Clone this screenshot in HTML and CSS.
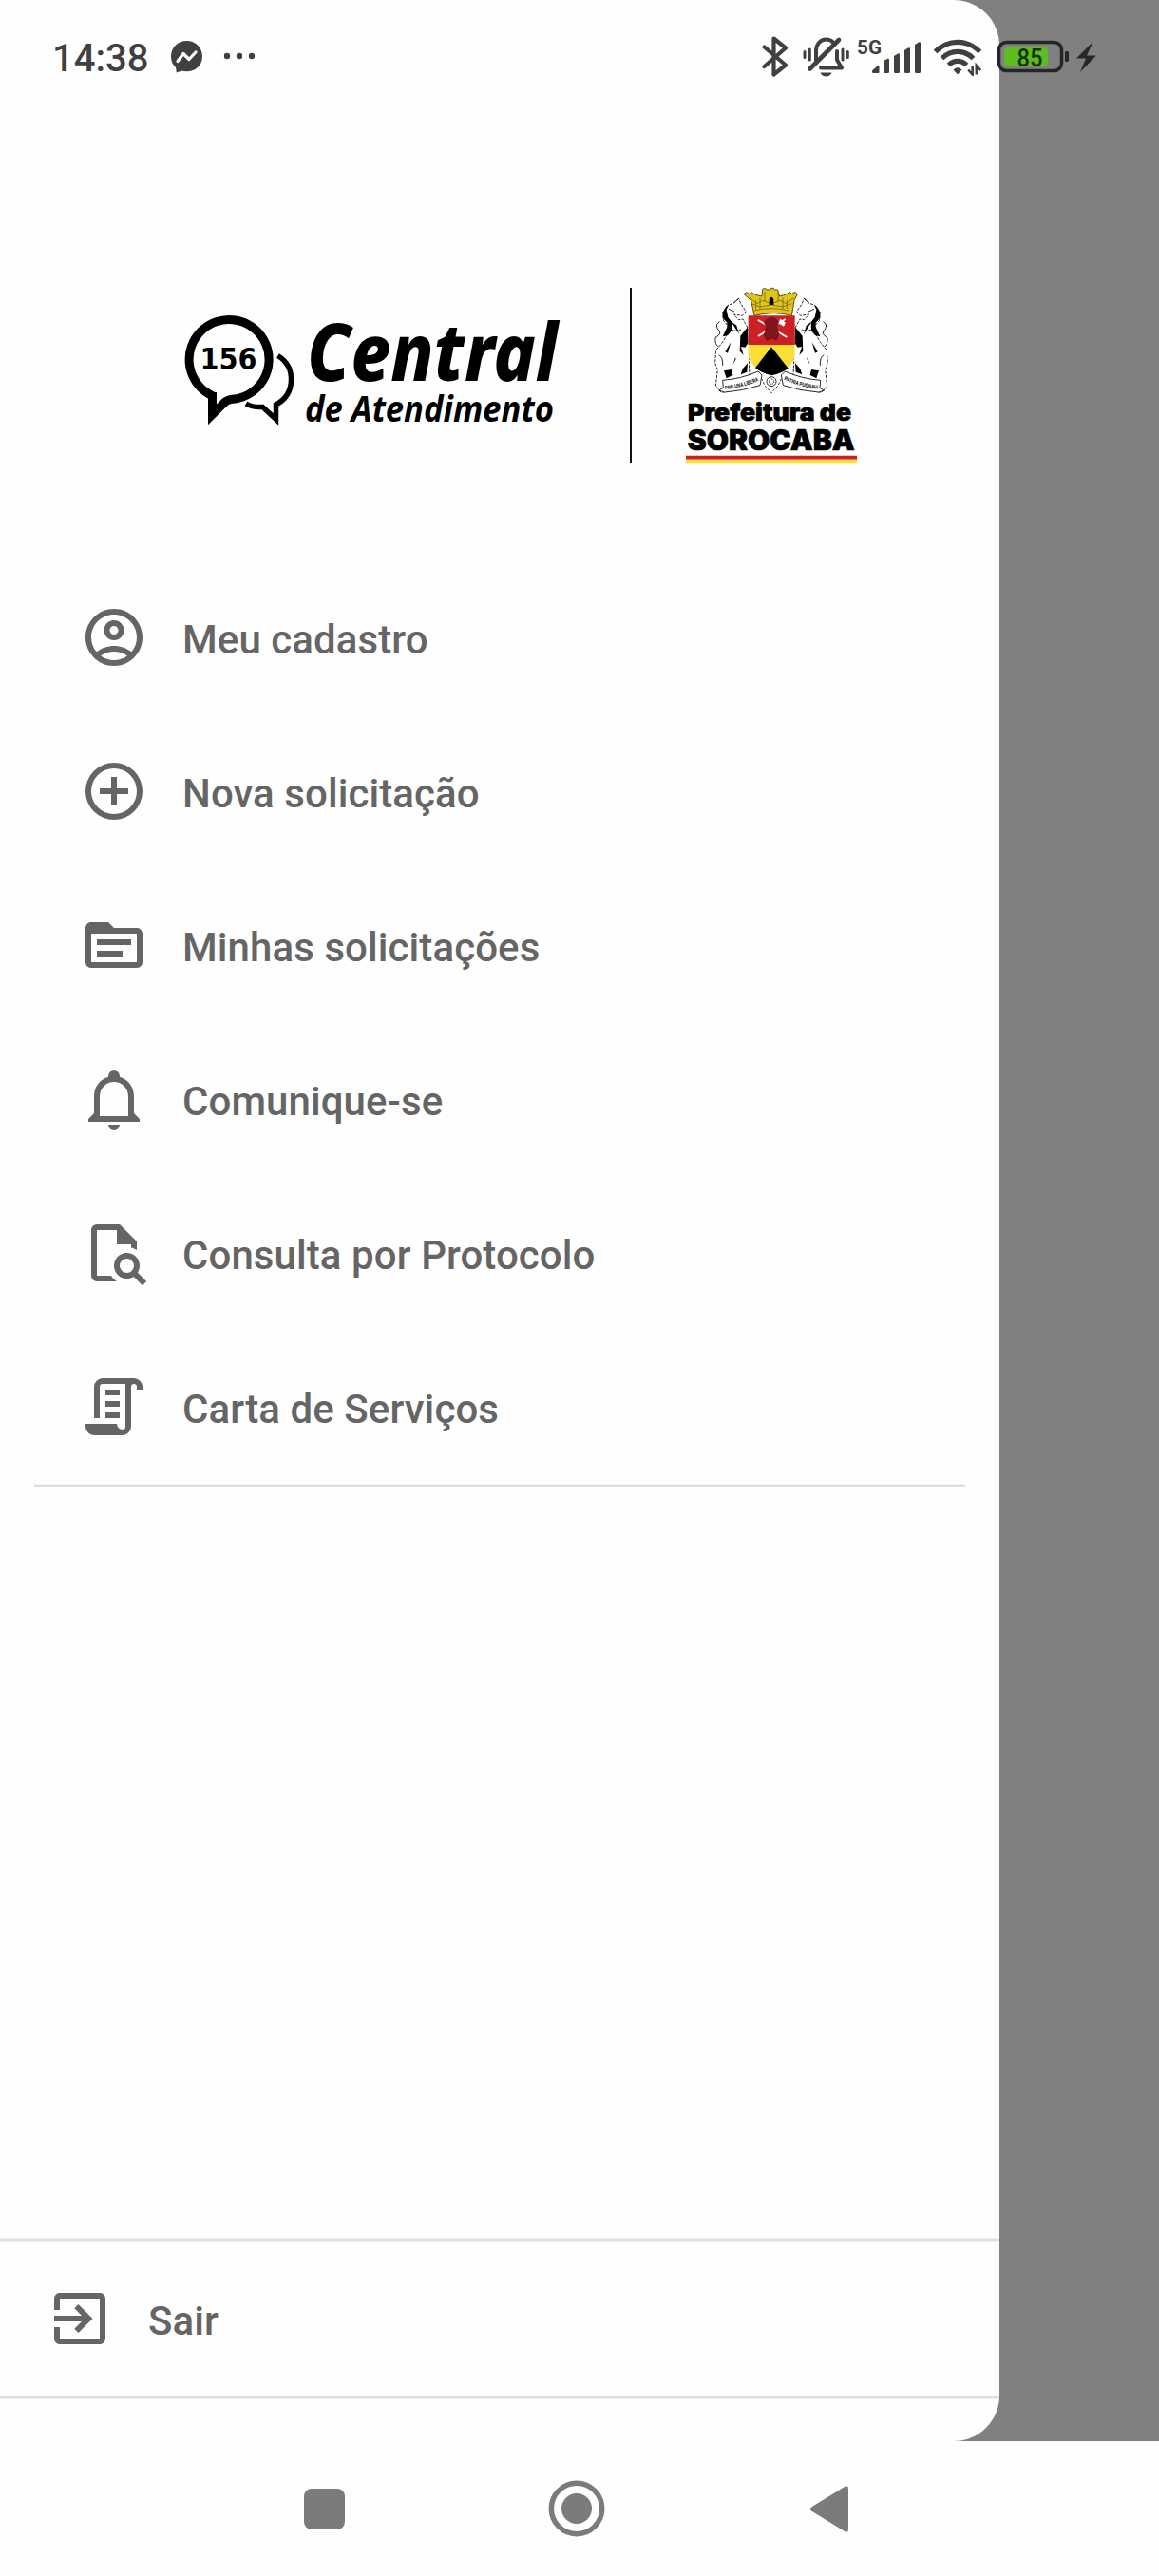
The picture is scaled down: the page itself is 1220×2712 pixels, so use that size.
FILE: index.html
```html
<!DOCTYPE html>
<html lang="pt-BR">
<head>
<meta charset="utf-8">
<title>Central de Atendimento 156</title>
<link rel="stylesheet" href="styles.css">
</head>
<body>
<div class="screen">
  <header class="status">
    <span class="clock">14:38</span>
    <svg class="messenger" width="34" height="34" viewBox="179 43 34 34"><path d="M196.500 43C187 43 180 50 180 59.500c0 4.800 1.800 8.500 5 11.500l.8 5.500 5.500-2c1.600.5 3.400.7 5.200.7 9.500 0 16.500-6.500 16.500-15.700S206 43 196.500 43z" fill="#404040"/><path d="M187 64.500l6-8 6 6 7-7.500" fill="none" stroke="#fff" stroke-width="3.200" stroke-linejoin="round" stroke-linecap="round"/></svg>
    <svg class="more" width="34" height="8" viewBox="235 55 34 8" fill="#404040"><circle cx="239" cy="59" r="3.200"/><circle cx="252" cy="59" r="3.200"/><circle cx="265" cy="59" r="3.200"/></svg>
    <svg class="bluetooth" width="28" height="44" viewBox="802 37 28 44"><path d="M804.500 49.500L827 68.500 814.500 78.500V40.500L827 50.500 804.500 70" fill="none" stroke="#404040" stroke-width="4.200" stroke-linejoin="round" stroke-linecap="round"/></svg>
    <svg class="mute" width="50" height="44" viewBox="845 38 50 44" fill="none" stroke="#404040" stroke-width="4" stroke-linecap="round">
      <path d="M859 63.500V54c0-7.500 4.500-12.400 10.500-12.400 3 0 5.500 1 7.500 3M881 54v9l5 8.500H864" stroke-linejoin="round"/><path d="M852.500 72.500L883 42" stroke-width="4.600"/><path d="M847 54.500v6M852.300 52v11M887 52v11M892.300 54.500v6" stroke-width="3"/><path d="M863.500 76.500h12c-1 2.500-3.300 4-6 4s-5-1.500-6-4z" fill="#404040" stroke="none"/></svg>
    <svg class="signal" width="68" height="42" viewBox="902 38 68 42" fill="#404040"><text x="902" y="57" class="net" textLength="26" lengthAdjust="spacingAndGlyphs">5G</text>
      <path d="M918 74.500l6-5.500q1.500-1 1.500 1v6q0 1-1 1h-5q-1.500 0-1.500-1zM930 64l4-2q2-1 2 1v12.500q0 1.500-1.500 1.500h-3q-1.500 0-1.500-1.500zM941 59l4-2.500q2-1 2 1v18q0 1.500-1.500 1.500h-3q-1.500 0-1.500-1.500zM952 53l4-2.500q2-1 2 1v24q0 1.500-1.500 1.500h-3q-1.500 0-1.500-1.500zM963 47l4-2.500q2-1 2 1v30q0 1.500-1.500 1.500h-3q-1.500 0-1.500-1.500z"/></svg>
    <svg class="wifi" width="52" height="40" viewBox="983 40 52 40" fill="none" stroke="#404040" stroke-width="5.200"><path d="M984.500 54.500C998 41 1018 41 1031.500 54.500M991.500 61.500C1001 52 1015 52 1024.500 61.500M998.500 68.500c5.500-5.500 13.500-5.500 19 0"/><path d="M1003.500 73.500q4.500-4.500 9 0l-4.500 5z" fill="#404040" stroke="none"/><path d="M1023.700 69v9.500l-4.500-5M1027.800 78.500V69l4.500 5" stroke-width="2.600"/></svg>
    <svg class="battery" width="108" height="36" viewBox="1049 42 108 36"><rect x="1057" y="50" width="46" height="19" rx="3" fill="#5dbd20"/><rect x="1051.500" y="44.500" width="66" height="30" rx="8" fill="none" stroke="#262626" stroke-width="3.500"/><rect x="1121" y="54" width="4" height="11" rx="1.500" fill="#262626"/><text x="1070.500" y="69.500" class="charge" textLength="27" lengthAdjust="spacingAndGlyphs">85</text><path d="M1150.500 44L1133 61.500h10L1137 76l17-17.500h-10z" fill="#262626"/></svg>
  </header>

  <aside class="drawer">
    <div class="brand">
      <svg class="central" width="402" height="122" viewBox="190 328 402 122">
        <g fill="none" stroke="#000">
          <path d="M224 416.900A42 42 0 1 1 243 420.500C240 421 238 422 236 424L223.500 436.500V413" stroke-width="9"/>
          <path d="M292.500 374.500C303 381 307 391 306.500 401C306 413 300 421 290.500 426V441.500L276.500 428.500C270 429 264 428 259 425" stroke-width="5.500"/>
        </g>
        <text x="210.500" y="388.500" class="n156" textLength="60" lengthAdjust="spacingAndGlyphs">156</text>
        <text x="323" y="400.500" class="big" textLength="264" lengthAdjust="spacingAndGlyphs">Central</text>
        <text x="321" y="443.500" class="sub" textLength="262" lengthAdjust="spacingAndGlyphs">de Atendimento</text>
      </svg>
      <div class="rule"></div>
      <svg class="crest" width="180" height="185" viewBox="246 38 540 555">
        <g id="unicorn" stroke="#000" stroke-width="2.500" stroke-linejoin="round">
          <path d="M413 72l-17 15-17 6-17 22 3 27 14 16-3 27-15 26-20 24-3 40 8 22-6 50 18 22 54-8 36-18-3-72 8-34-9-68-18-32-13 2-16-17 27 4 12-14-16-22z" fill="#fff" stroke-dasharray="9 4"/>
          <path d="M362 115l11-18 8-4-7 14 5 24 12 15-1 28-12 14-16 4 14-30 0-14-14-15zM392 150l22 35-8-28-16-12zM418 190l23-28 2 50-10 14-13-2 8 26-12-12zM378 244l10-34-18 30zM366 300l24-4 4 18-20 10zM402 258l-8 24 10-20zM425 294l16-18-2 28-20 8z" stroke="none"/>
          <path d="M412 72l-15 14M353 145q-16 8-6 24 16 14-8 26-2 22 10 30M381 105l18 8M388 170q20 8 32 0M350 250q14 8 12 34" fill="none"/>
        </g>
        <use href="#unicorn" transform="matrix(-1 0 0 1 1032 0)"/>
        <path d="M429 58l8-6 10 6 5-6 14 8 20 5 2-23 9-3 3 5h12l3-5 8 0 3 5h10l6 21 20-6 12-8 6 6 10-6 8 7-10 20-8 48q-55-16-118 0l-10-48z" fill="#e0c51f" stroke="#5e5207" stroke-width="3"/>
        <path d="M448 70l22 18 18-10 28 10 28-10 18 10 24-18M452 88l28 10 36-6 36 6 28-10M462 110q54-14 108 0M467 76v30M480 70v34M552 70v34M565 76v28M495 50v30M537 50v30" fill="none" stroke="#776808" stroke-width="2.500"/>
        <path d="M509 92V74q7-14 14 0v18z"/>
        <path d="M443 126h147v92H443z" fill="#cb2026"/>
        <path d="M443 218h147v28q-2 47-74 69-69-22-73-69z" fill="#fbdf35"/>
        <path d="M516 225l53 67q-18 15-53 23-33-8-51-24z"/>
        <path d="M473 139l92 55M560 137l-86 54" stroke="#fff" stroke-width="5"/><path d="M544 136l17 12-6 12-17-10z" fill="#fff"/>
        <path d="M503 137l13-6 14 6 9 12-7 12 8 22-8 20-16-7-15 8-8-20 8-22-8-13z" fill="#7d171b" stroke="#2c0709" stroke-width="2" stroke-dasharray="5 3"/>
        <g stroke="#000" stroke-width="2.500" fill="#fff"><path d="M362 330q58-4 112-28l12 12-6 32q-56 18-112 22l-18-6 14-8zM671 330q-58-4-112-28l-12 12 6 32q56 18 112 22l18-6-14-8z"/><path d="M484 324l12 24 20 22 20-22 12-24" stroke-dasharray="8 5"/><circle cx="516" cy="334" r="15"/><circle cx="516" cy="334" r="8" stroke-dasharray="4 2"/></g>
        <path id="motto-l" d="M370 360q60-8 110-30" fill="none"/><path id="motto-r" d="M555 328q52 24 112 31" fill="none"/>
        <text class="motto"><textPath href="#motto-l" textLength="110" lengthAdjust="spacingAndGlyphs">PRO UNA LIBERA</textPath></text>
        <text class="motto"><textPath href="#motto-r" textLength="112" lengthAdjust="spacingAndGlyphs">PATRIA PUGNAVI</textPath></text>
        <text x="252" y="459" class="pref" textLength="516" lengthAdjust="spacingAndGlyphs">Prefeitura de</text>
        <text x="251" y="550" class="soro" textLength="528" lengthAdjust="spacingAndGlyphs">SOROCABA</text>
        <path d="M246 568h540v12H246z" fill="#cb2026"/><path d="M246 580h540v11H246z" fill="#fbdf35"/>
      </svg>
    </div>

    <nav class="menu">
      <a class="item"><svg class="icon" viewBox="0 0 24 24"><path fill-rule="evenodd" d="M12 2C6.480 2 2 6.480 2 12s4.480 10 10 10 10-4.480 10-10S17.520 2 12 2zM7.350 18.500C8.660 17.560 10.260 17 12 17s3.340.56 4.650 1.500C15.340 19.440 13.740 20 12 20s-3.340-.56-4.650-1.500zm10.790-1.380C16.450 15.800 14.320 15 12 15s-4.450.8-6.140 2.120C4.700 15.730 4 13.950 4 12c0-4.420 3.580-8 8-8s8 3.580 8 8c0 1.950-.7 3.730-1.860 5.120z"/><path fill-rule="evenodd" d="M12 6c-1.930 0-3.500 1.570-3.500 3.500S10.070 13 12 13s3.500-1.570 3.500-3.500S13.930 6 12 6zm0 5c-.83 0-1.500-.67-1.500-1.500S11.170 8 12 8s1.500.67 1.500 1.500S12.830 11 12 11z"/></svg><span>Meu cadastro</span></a>
      <a class="item"><svg class="icon" viewBox="0 0 24 24"><path fill-rule="evenodd" d="M13 7h-2v4H7v2h4v4h2v-4h4v-2h-4V7zM12 2a10 10 0 1 0 0 20 10 10 0 0 0 0-20zm0 18a8 8 0 1 1 0-16 8 8 0 0 1 0 16z"/></svg><span>Nova solicitação</span></a>
      <a class="item"><svg class="icon" viewBox="0 0 24 24"><path fill-rule="evenodd" d="M20 6h-8l-2-2H4c-1.100 0-2 .9-2 2v12c0 1.100.9 2 2 2h16c1.100 0 2-.9 2-2V8c0-1.100-.9-2-2-2zM4 8h16v10H4zM6 10h12v2H6zM6 14h9v2H6z"/></svg><span>Minhas solicitações</span></a>
      <a class="item"><svg class="icon" viewBox="0 0 24 24"><path d="M10,21H14A2,2 0 0,1 12,23A2,2 0 0,1 10,21M21,19V20H3V19L5,17V11C5,7.900 7.030,5.170 10,4.290V4A2,2 0 0,1 14,4V4.290C16.970,5.170 19,7.900 19,11V17L21,19M17,11A5,5 0 0,0 7,11V18H17V11Z"/></svg><span>Comunique-se</span></a>
      <a class="item"><svg class="icon" viewBox="0 0 24 24"><path fill-rule="evenodd" d="M14,2H6A2,2 0 0,0 4,4V20A2,2 0 0,0 6,22H13C12.590,21.750 12.200,21.440 11.860,21.100C11.530,20.770 11.250,20.400 11,20H6V4H13V9H18V10.180C18.710,10.340 19.390,10.610 20,11V8L14,2M20.310,18.900C21.640,16.790 21,14 18.910,12.680C16.800,11.350 14,12 12.690,14.080C11.350,16.190 12,18.970 14.090,20.300C15.550,21.230 17.410,21.230 18.880,20.320L22,23.390L23.390,22L20.310,18.900M16.500,19A2.500,2.500 0 1,1 16.500,14A2.500,2.500 0 1,1 16.500,19Z"/></svg><span>Consulta por Protocolo</span></a>
      <a class="item"><svg class="icon" viewBox="0 0 24 24"><path d="M15,20A1,1 0 0,0 16,19V4H8A1,1 0 0,0 7,5V16H5V5A3,3 0 0,1 8,2H19A3,3 0 0,1 22,5V6H20V5A1,1 0 0,0 18,5V19A3,3 0 0,1 15,22H5A3,3 0 0,1 2,19V18H13A2,2 0 0,0 15,20M9,6H14V8H9V6M9,10H14V12H9V10M9,14H14V16H9V14Z"/></svg><span>Carta de Serviços</span></a>
    </nav>
    <div class="line inset"></div>

    <div class="footer">
      <div class="line"></div>
      <a class="exit"><svg class="icon" viewBox="0 0 24 24"><path d="M10.090 15.590L11.500 17l5-5-5-5-1.410 1.410L12.670 11H3v2h9.670l-2.580 2.590zM19 3H5c-1.110 0-2 .9-2 2v4h2V5h14v14H5v-4H3v4c0 1.100.89 2 2 2h14c1.100 0 2-.9 2-2V5c0-1.100-.9-2-2-2z"/></svg><span>Sair</span></a>
      <div class="line"></div>
    </div>
  </aside>

  <footer class="navbar">
    <svg width="43" height="43" viewBox="0 0 43 43"><rect width="43" height="43" rx="8"/></svg>
    <svg width="60" height="60" viewBox="0 0 60 60"><circle cx="30" cy="30" r="26.700" fill="none" stroke="#7b7b7b" stroke-width="5.500"/><circle cx="30" cy="30" r="16"/></svg>
    <svg width="40" height="49" viewBox="0 0 40 49"><path d="M1 22.500L36 1Q40-1 40 3v43q0 4-4 2L1 26.500q-2-2 0-4z"/></svg>
  </footer>
</div>
</body>
</html>
```
FILE: styles.css
```css
* { box-sizing: border-box; }
body { margin: 0; font-family: Roboto, "Noto Sans", sans-serif; }

.screen {
  position: relative;
  display: flex;
  flex-direction: column;
  width: 1220px;
  height: 2712px;
  background: #808080;
}

/* System bar floats above the drawer and the scrim */
.status {
  position: absolute;
  top: 0;
  left: 0;
  z-index: 2;
  display: flex;
  align-items: flex-start;
  width: 1220px;
  height: 120px;
}
.status svg { flex: none; display: block; }
.clock {
  width: 124px;
  margin: 38px 0 0 55px;
  font-size: 40px;
  line-height: 48px;
  font-weight: 500;
  color: #404040;
}
.messenger { margin-top: 43px; }
.more { margin: 55px 0 0 22px; }
.bluetooth { margin: 37px 0 0 533px; }
.mute { margin: 38px 0 0 15px; }
.signal { margin: 38px 0 0 7px; }
.wifi { margin: 40px 0 0 13px; }
.battery { margin: 42px 0 0 14px; }
.net { font-size: 21px; font-weight: 700; }
.charge { font-size: 25px; font-weight: 500; fill: #16330a; }

.drawer {
  display: flex;
  flex-direction: column;
  width: 1052px;
  height: 2570px;
  border-radius: 0 48px 48px 0;
  background: #fefefe;
  color: #656565;
  overflow: hidden;
}

.brand {
  display: flex;
  align-items: flex-start;
  height: 590px;
  padding: 303px 0 0 190px;
}
.brand svg { display: block; flex: none; overflow: visible; }
.central { margin-top: 25px; }
.rule { width: 2px; height: 184px; margin: 0 57px 0 71px; background: #111; }
.n156 { font-family: "DejaVu Sans", sans-serif; font-size: 32px; font-weight: 700; }
.big { font-family: "Noto Sans", sans-serif; font-size: 84px; font-weight: 800; font-style: italic; }
.sub { font-family: "Noto Sans", sans-serif; font-size: 38px; font-weight: 700; font-style: italic; }
.pref, .soro { font-family: Inter, sans-serif; font-weight: 900; stroke: #000; stroke-width: 2; }
.pref { font-size: 73px; }
.soro { font-size: 88px; }
.motto { font-family: "Liberation Sans", sans-serif; font-size: 18px; font-weight: 700; }

.icon { width: 72px; height: 72px; flex: none; fill: #656565; }
.item, .exit {
  display: flex;
  align-items: center;
  font-size: 42px;
  line-height: 50px;
  font-weight: 500;
  letter-spacing: 0.08px;
}
.item { height: 162px; padding-left: 84px; gap: 36px; }
.item span, .exit span { margin-top: 6px; }

.line {
  flex: none;
  height: 4px;
  background: linear-gradient(#efefef 1px, #dfdfdf 1px 3px, #efefef 3px);
}
.inset { margin: 0 36px; }

.footer { margin-top: auto; padding-bottom: 44px; }
.exit { height: 162px; padding-left: 48px; gap: 36px; }

.navbar {
  display: flex;
  align-items: center;
  height: 142px;
  padding-left: 320px;
  background: #fefefe;
  fill: #7b7b7b;
}
.navbar svg + svg { margin-left: 214px; }
.navbar svg + svg + svg { margin-left: 216px; }
```
